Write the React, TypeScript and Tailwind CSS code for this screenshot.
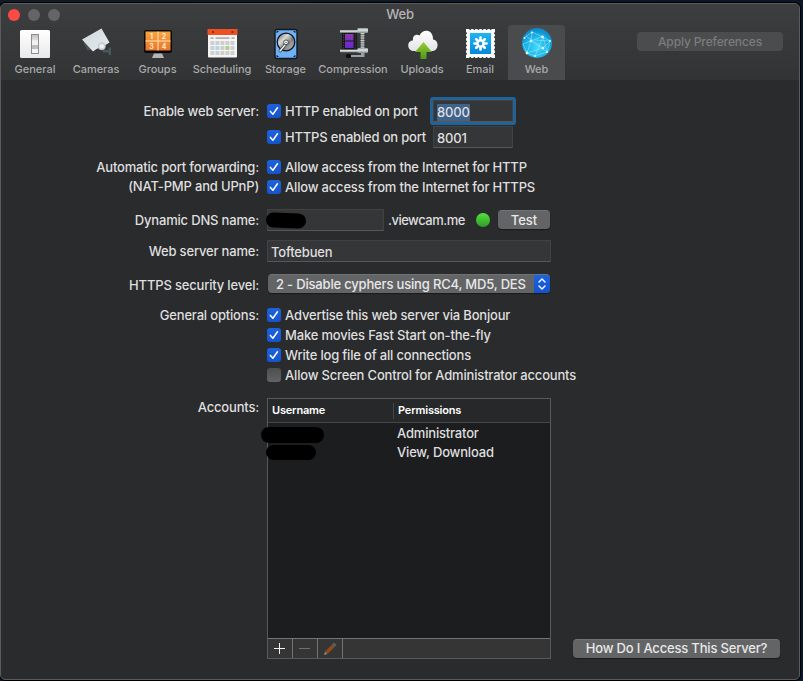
import type { ReactNode } from "react";

function Check({ on = true }: { on?: boolean }) {
  return (
    <span
      className={`flex h-[14px] w-[14px] shrink-0 items-center justify-center rounded-[3px] ${
        on ? "bg-linear-to-b from-[#1d62dc] to-[#1554cf]" : "bg-linear-to-b from-[#4d4e50] to-[#626365]"
      }`}
    >
      {on && (
        <svg width="14" height="14" viewBox="0 0 14 14" fill="none">
          <path d="M3.4 7.4 5.9 10.2 10.5 3.8" stroke="#fff" strokeWidth="1.5" strokeLinecap="round" strokeLinejoin="round" />
        </svg>
      )}
    </span>
  );
}

function Option({ children, on = true }: { children: ReactNode; on?: boolean }) {
  return (
    <div className="flex h-5 items-center gap-1">
      <Check on={on} />
      <span>{children}</span>
    </div>
  );
}

function Row({ label, labelClass = "", className = "", children }: { label: string; labelClass?: string; className?: string; children: ReactNode }) {
  return (
    <div className={`flex items-center ${className}`}>
      <div className={`mr-2 w-[258px] shrink-0 text-right ${labelClass}`}>{label}</div>
      {children}
    </div>
  );
}

function GeneralIcon() {
  return (
    <svg width="32" height="32" viewBox="0 0 32 32">
      <defs>
        <linearGradient id="plate" x2="0" y2="1"><stop stopColor="#fff" /><stop offset="1" stopColor="#e9e9e9" /></linearGradient>
        <linearGradient id="lever" x2="0" y2="1"><stop stopColor="#bdbdbd" /><stop offset=".4" stopColor="#eee" /><stop offset=".55" stopColor="#b8b8b8" /><stop offset="1" stopColor="#fff" /></linearGradient>
      </defs>
      <rect x="1" y="2" width="30" height="28" rx="1.5" fill="url(#plate)" />
      <rect x="12.5" y="6.500" width="7" height="19" fill="url(#lever)" stroke="#8f8f8f" />
      <path d="M13 12.500h6v4.500h-6z" fill="#f2f2f2" /><path d="M13 17h6v4h-6z" fill="#bcbcbc" /><path d="M13 21h6v4h-6z" fill="#f4f4f4" />
    </svg>
  );
}

function CameraIcon() {
  return (
    <svg width="32" height="32" viewBox="0 0 32 32">
      <defs><linearGradient id="cam" x2="1" y2="1"><stop stopColor="#cfd8dc" /><stop offset="1" stopColor="#e6ecef" /></linearGradient></defs>
      <path d="M3.500 15 7.500 22.500 12 21 6 14z" fill="#4a5357" />
      <path d="M23 22h5.500v-2.500h2.500v7.500h-2.500v-2.500H23z" fill="#49565c" />
      <path d="M2 11.500 21.500.5 29.500 14.500 24 18 16.500 21 13 23.500z" fill="url(#cam)" />
      <circle cx="21.800" cy="18.300" r="3.600" fill="#d3dbdf" stroke="#b4bec3" strokeWidth=".7" />
      <circle cx="21.800" cy="18.300" r="2" fill="#f1f4f6" />
    </svg>
  );
}

function GroupsIcon() {
  return (
    <svg width="32" height="32" viewBox="0 0 32 32">
      <defs><linearGradient id="orange" x2="0" y2="1"><stop stopColor="#f6a43d" /><stop offset="1" stopColor="#ec762b" /></linearGradient></defs>
      <rect x="2" y="2" width="28" height="23" rx="2" fill="#090909" />
      <rect x="3.500" y="3.500" width="25" height="19" fill="url(#orange)" />
      <path d="M3.500 13h25M16 3.500v19" stroke="#ffe3be" strokeWidth="1" />
      <path d="M12 25.500h8l2 4.500H10z" fill="#b5b5b5" />
      <g fill="#fff3dc" fontSize="7" fontWeight="600" textAnchor="middle" fontFamily="Inter, sans-serif">
        <text x="9.500" y="10.700">1</text><text x="22" y="10.700">2</text><text x="9.500" y="20.700">3</text><text x="22" y="20.700">4</text>
      </g>
    </svg>
  );
}

function ScheduleIcon() {
  const cols = [3.6, 8.6, 13.600, 18.600, 23.600];
  return (
    <svg width="32" height="32" viewBox="0 0 32 32">
      <rect x="2" y="2" width="29" height="27.500" rx="1" fill="#f4f4f4" />
      <path d="M1.500 1h30v6h-30z" fill="#ed5021" />
      <path d="M6 3h2v2H6zM25.500 3h2v2h-2z" fill="#8c2d12" />
      <path d="M9.500 9.300h14v1.600h-14z" fill="#b1b1b1" />
      <path d="M4.500 9.300h3v1.600h-3zM25.500 9.300h3v1.600h-3z" fill="#b1b1b1" />
      {[13, 18, 23].map((y) =>
        cols.map((x, i) => (
          <rect key={`${x}-${y}`} x={x + 0.8} y={y} width="4" height="4" rx=".6" fill={y === 18 && i === 1 ? "#a9d9ef" : y === 18 && i === 3 ? "#aed091" : "#cfcfcf"} />
        )),
      )}
    </svg>
  );
}

function StorageIcon() {
  return (
    <svg width="32" height="32" viewBox="0 0 32 32">
      <defs><linearGradient id="disk" x2="1" y2="1"><stop stopColor="#555" /><stop offset=".35" stopColor="#ddd" /><stop offset=".6" stopColor="#777" /><stop offset="1" stopColor="#ddd" /></linearGradient></defs>
      <rect x="5" y="1.500" width="22" height="29" rx="2" fill="#6eb1f7" stroke="#101820" strokeWidth="1.400" />
      <path d="M6.500 3h2v1h-1v1h-1zM23.500 3h2v2h-1v-1h-1zM6.500 27h1v1h1v1h-2zM24.500 27h1v2h-2v-1h1z" fill="#16263a" />
      <circle cx="16" cy="14" r="8.800" fill="url(#disk)" stroke="#151515" strokeWidth="1.300" />
      <circle cx="16" cy="14" r="5" fill="none" stroke="#bbb" strokeWidth=".5" />
      <path d="m10 23 5-6" stroke="#333" strokeWidth="2.800" strokeLinecap="round" /><path d="m10 23 5-6" stroke="#e7eef4" strokeWidth="1.600" strokeLinecap="round" />
      <circle cx="16" cy="14.300" r="2.300" fill="#fff" stroke="#333" strokeWidth=".8" />
      <circle cx="16" cy="14.300" r=".6" fill="#222" />
    </svg>
  );
}

function CompressIcon() {
  return (
    <svg width="32" height="32" viewBox="0 0 32 32">
      <defs>
        <linearGradient id="steel" x2="0" y2="1"><stop stopColor="#8d9797" /><stop offset=".4" stopColor="#e2e8e7" /><stop offset="1" stopColor="#7e8989" /></linearGradient>
        <linearGradient id="film" x2="0" y2="1"><stop stopColor="#8a3aae" /><stop offset="1" stopColor="#6429cc" /></linearGradient>
      </defs>
      <path d="M5 5h15v18H5z" fill="#191919" /><path d="M8 6h8.500v6.500H8zM8 13.500h8.500V20H8z" fill="url(#film)" />
      <path d="M6.500 6v16M18.300 6v16" stroke="#454545" strokeDasharray="1.200 1.500" />
      <path d="M25.500 4v19" stroke="#7b8383" strokeWidth="3.200" /><path d="M25.500 5v17" stroke="#c3caca" strokeWidth="4" strokeDasharray="1 1.300" />
      <rect x="3" y="2" width="18" height="2.800" fill="url(#steel)" /><rect x="20.500" y="0" width="10.500" height="5" rx="1" fill="url(#steel)" />
      <rect x="3" y="21.500" width="18" height="2.800" fill="url(#steel)" /><rect x="20.500" y="20" width="10.500" height="5" rx="1" fill="url(#steel)" />
      <path d="M24 25h3.500v4H13v-2h11z" fill="#98a1a1" /><rect x="9" y="26" width="5" height="4" rx="1.500" fill="#0c0c0c" />
    </svg>
  );
}

function UploadIcon() {
  return (
    <svg width="32" height="32" viewBox="0 0 32 32">
      <defs>
        <linearGradient id="cloud" x2="0" y2="1"><stop stopColor="#fff" /><stop offset="1" stopColor="#e3e4e5" /></linearGradient>
        <linearGradient id="leaf" x2="0" y2="1"><stop stopColor="#9bcb35" /><stop offset="1" stopColor="#4c991a" /></linearGradient>
      </defs>
      <path d="M8 23C.5 23 .5 12.500 7 12.500 6 7 11 5.500 13.500 7.500 16.500.2 27.500 1 27 11.500c6.500.5 6 11.500-1 11.500z" fill="url(#cloud)" />
      <path d="M17.500 14 26 24h-5.500v7h-6v-7H9z" fill="url(#leaf)" />
    </svg>
  );
}

function EmailIcon() {
  const notches = [4.9, 9, 13.1, 17.200, 21.300, 25.400];
  return (
    <svg width="32" height="32" viewBox="0 0 32 32">
      <defs><linearGradient id="mail" x2="0" y2="1"><stop stopColor="#20b5ef" /><stop offset="1" stopColor="#0787da" /></linearGradient></defs>
      <path d="M2 1h29v29H2z" fill="#fafafa" />
      {notches.map((n) => (
        <g key={n} fill="#38393a">
          <circle cx={n + 1.3} cy="1" r="1" /><circle cx={n + 1.3} cy="30" r="1" />
          <circle cx="2" cy={n + 0.3} r="1" /><circle cx="31" cy={n + 0.3} r="1" />
        </g>
      ))}
      <path d="M6 5h21v21H6z" fill="url(#mail)" />
      {[0, 45, 90, 135, 180, 225, 270, 315].map((a) => (
        <path key={a} d="M16.500 12v-2.500" transform={`rotate(${a} 16.500 15.500)`} stroke="#fff" strokeWidth="2.600" strokeLinecap="round" />
      ))}
      <circle cx="16.500" cy="15.500" r="3" fill="none" stroke="#fff" strokeWidth="2.200" />
    </svg>
  );
}

function GlobeIcon() {
  return (
    <svg width="32" height="32" viewBox="0 0 32 32">
      <defs><radialGradient id="globe" cx=".5" cy=".65" r=".7"><stop stopColor="#3fd8f7" /><stop offset=".55" stopColor="#1ab2e8" /><stop offset="1" stopColor="#0b78be" /></radialGradient></defs>
      <circle cx="16" cy="15" r="15" fill="url(#globe)" />
      <g stroke="#a8effd" strokeWidth=".7" fill="none" opacity=".7">
        <path d="m3 10 8-6 11 5 7 4-3 11-12 4-8-3-4-9 8-3 12-5M10 13l16 11M22 9l-8 19M10 13 6 25l16-5 7-7-15-1M11 4l-1 9M5 8l17 12M22 9l4 15" />
      </g>
      <g fill="#d6faff"><circle cx="11" cy="4.500" r="1.100" /><circle cx="21.500" cy="9" r="1.400" /><circle cx="10" cy="13" r="1.300" /><circle cx="26" cy="24" r="1" /><circle cx="6" cy="25" r="1.400" /><circle cx="14" cy="28" r="1" /><circle cx="22" cy="20" r="1.300" /><circle cx="29" cy="13" r="1" /><circle cx="3.500" cy="10" r="1" /></g>
    </svg>
  );
}

const tabs = [
  { name: "General", box: "w-[54px]", icon: <GeneralIcon /> },
  { name: "Cameras", box: "w-[68px]", icon: <CameraIcon /> },
  { name: "Groups", box: "w-[55px]", icon: <GroupsIcon /> },
  { name: "Scheduling", box: "w-[74px]", icon: <ScheduleIcon /> },
  { name: "Storage", box: "w-[53px]", icon: <StorageIcon /> },
  { name: "Compression", box: "w-[82px]", icon: <CompressIcon /> },
  { name: "Uploads", box: "w-[56px]", icon: <UploadIcon /> },
  { name: "Email", box: "ml-[2px] w-[56px]", icon: <EmailIcon /> },
  { name: "Web", box: "w-[57px] rounded-t-[4px] bg-[#4a4b4c]", icon: <GlobeIcon /> },
];

const field = "flex h-[22px] shrink-0 items-center border border-[#414244] border-b-[#56575a] bg-[#353638] px-[3px] pt-px";
const button = "flex shrink-0 items-center justify-center rounded-[4px] border-t border-[#717274] bg-[#636466] text-[#e8e8e8] shadow-[0_1px_1px_#1b1b1c]";

export default function App() {
  return (
    <div className="h-[681px] w-[803px] overflow-hidden bg-linear-to-r from-[#131a26] to-[#0d1626] pt-[3px] font-['Inter','Liberation_Sans',sans-serif] text-[13px] leading-5 font-[450] tracking-[-0.18px] text-[#dfdfdf]">
      <div className="flex h-[677px] w-[800px] flex-col overflow-hidden rounded-[5px] border border-[#5a5b5d] bg-[#2a2b2d] shadow-[0_0_0_1px_#000]">
        <header className="h-[76px] shrink-0 bg-linear-to-b from-[#3d3e3f] to-[#323334]">
          <div className="flex h-[21px] items-center">
            <div className="flex w-[120px] gap-2 pl-[7px]">
              <span className="h-3 w-3 rounded-full bg-[#fc4b45]" />
              <span className="h-3 w-3 rounded-full bg-[#656567]" />
              <span className="h-3 w-3 rounded-full bg-[#656567]" />
            </div>
            <div className="flex-1 pr-[120px] pb-px text-center text-[#b4b4b5]">Web</div>
          </div>
          <div className="flex h-[55px] justify-between pr-4 pl-[7px]">
            <nav className="flex">
              {tabs.map((t) => (
                <div key={t.name} className={`flex flex-col items-center pt-[3px] text-[11px] leading-4 tracking-[-0.03px] text-[#a9a9aa] ${t.box}`}>
                  {t.icon}
                  <span className="mt-[1px]">{t.name}</span>
                </div>
              ))}
            </nav>
            <div className="mt-[7px] flex h-[19px] w-[146px] items-center justify-center rounded-[4px] bg-[#4b4c4d] text-[12px] tracking-[-0.12px] text-[#7b7c7d]">Apply Preferences</div>
          </div>
        </header>

        <main className="flex-1 pt-[18px]">
          <Row label="Enable web server:" className="h-[26px]">
            <Check />
            <span className="ml-1 w-[148px]">HTTP enabled on port</span>
            <div className={`${field} w-20 rounded-[1px] ring-3 ring-[#226397]`}>
              <span className="mt-px bg-[#3f638b] leading-[17px]">8000</span>
            </div>
          </Row>
          <Row label="" className="h-[26px]">
            <Check />
            <span className="ml-1 w-[148px] whitespace-nowrap">HTTPS enabled on port</span>
            <div className={`${field} w-20`}>8001</div>
          </Row>
          <Row label="Automatic port forwarding:" className="mt-[7px] h-5"><Option>Allow access from the Internet for HTTP</Option></Row>
          <Row label="(NAT-PMP and UPnP)" labelClass="pb-[2px]" className="h-5"><Option>Allow access from the Internet for HTTPS</Option></Row>
          <Row label="Dynamic DNS name:" className="mt-3 h-[22px]">
            <div className={`${field} w-[117px]`}>
              <span className="-ml-[5px] h-[15px] w-10 rotate-2 rounded-full bg-black" />
            </div>
            <span className="ml-1 w-[88px] tracking-[-0.5px]">.viewcam.me</span>
            <span className="h-[14px] w-[14px] rounded-full bg-linear-to-b from-[#54e33e] to-[#2f9c26]" />
            <div className={`${button} mb-px ml-2 h-[19px] w-[52px] pb-px tracking-normal`}>Test</div>
          </Row>
          <Row label="Web server name:" className="mt-[9px] h-[22px]">
            <div className={`${field} w-[284px]`}>Toftebuen</div>
          </Row>
          <Row label="HTTPS security level:" labelClass="pt-[2px]" className="mt-[11px] h-[22px]">
            <div className={`${button} mb-px ml-px h-[19px] w-[282px] overflow-hidden`}>
              <span className="flex-1 pl-2 whitespace-nowrap">2 - Disable cyphers using RC4, MD5, DES</span>
              <span className="flex h-[19px] w-4 items-center justify-center bg-linear-to-b from-[#1c63e0] to-[#1452c9]">
                <svg width="10" height="14" viewBox="0 0 10 14" fill="none" stroke="#fff" strokeWidth="1.400" strokeLinecap="round" strokeLinejoin="round"><path d="m2 5 3-3 3 3M2 9l3 3 3-3" /></svg>
              </span>
            </div>
          </Row>
          <Row label="General options:" className="mt-[10px] h-5"><Option>Advertise this web server via Bonjour</Option></Row>
          <Row label="" className="h-5"><Option>Make movies Fast Start on-the-fly</Option></Row>
          <Row label="" className="h-5"><Option>Write log file of all connections</Option></Row>
          <Row label="" className="h-5"><Option on={false}>Allow Screen Control for Administrator accounts</Option></Row>
          <div className="mt-[12px] flex">
            <div className="mr-2 w-[258px] shrink-0 text-right">Accounts:</div>
            <div className="mt-px flex h-[261px] w-[284px] shrink-0 flex-col border border-[#58595b] bg-[#1c1d1f]">
              <div className="flex h-6 shrink-0 items-center border-b border-[#454648] bg-[#272829] text-[11px] font-semibold text-white">
                <span className="w-[125px] pb-px pl-1">Username</span>
                <span className="h-4 border-l border-[#454648] pl-1 leading-[15px]">Permissions</span>
              </div>
              <div className="flex flex-1 pt-[1px]">
                <div className="w-[129px] pt-[3px]">
                  <div className="-ml-[7px] h-[16px] w-[63px] rounded-full bg-black" />
                  <div className="-ml-[2px] mt-[2px] h-[15px] w-[50px] rounded-full bg-black" />
                </div>
                <div className="leading-[19px]"><div>Administrator</div><div>View, Download</div></div>
              </div>
              <div className="flex h-5 shrink-0 border-t border-[#737475] bg-[#353536]">
                <span className="flex w-[25px] items-center justify-center border-r border-[#737475] pr-px"><svg width="11" height="11" viewBox="0 0 11 11" stroke="#f2f2f2"><path d="M0 5.500h11M5.500 0v11" /></svg></span>
                <span className="flex w-[25px] items-center justify-center border-r border-[#737475] pr-px"><svg width="11" height="11" viewBox="0 0 11 11" stroke="#707071"><path d="M0 5.500h11" /></svg></span>
                <span className="flex w-[25px] items-center justify-center border-r border-[#737475]"><svg width="14" height="14" viewBox="0 0 14 14"><path d="m1 13 1-3.500L4.500 12z" fill="#8c8780" /><path d="M3.300 10.700 10.300 3.700" stroke="#8d4a20" strokeWidth="3.600" /><path d="m10.300 3.700 1.900-1.900" stroke="#556266" strokeWidth="3.600" /></svg></span>
              </div>
            </div>
            <div className={`${button} mt-[242px] ml-[22px] h-[19px] w-[207px] pb-[2px]`}>How Do I Access This Server?</div>
          </div>
        </main>
      </div>
    </div>
  );
}
